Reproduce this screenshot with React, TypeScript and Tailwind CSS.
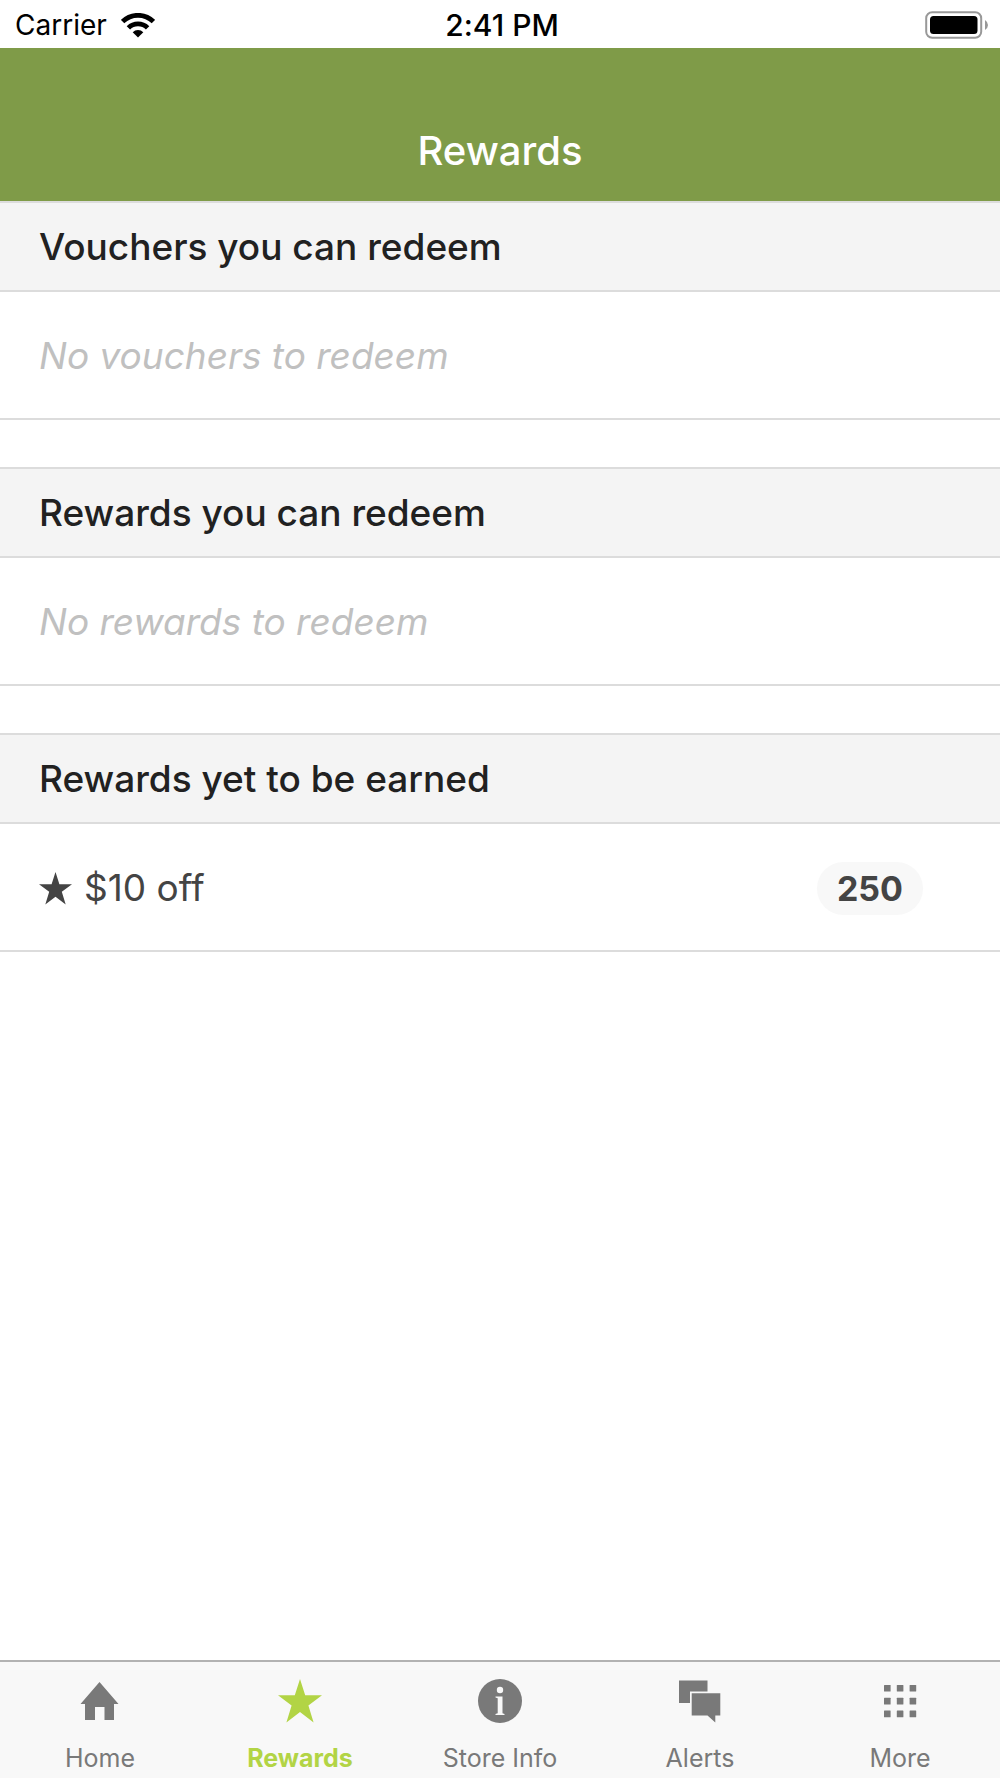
import { useState } from "react";
import type { ReactNode } from "react";

interface Reward {
  id: string;
  title: string;
  points: number;
}

interface Tab {
  id: string;
  label: string;
  icon: ReactNode;
}

const STAR_PATH = "M22 0 L27.2 16.2 H44 L30.4 26.4 L35.6 43.4 L22 33 L8.4 43.4 L13.6 26.4 L0 16.2 H16.8 Z";

const upcomingRewards: Reward[] = [{ id: "ten-off", title: "$10 off", points: 250 }];

const tabs: Tab[] = [
  {
    id: "home",
    label: "Home",
    icon: (
      <path d="M21.5 3 L40.5 25 H36 V41 H26.5 V28 H17 V41 H7 V25 H2.5 Z" />
    ),
  },
  {
    id: "rewards",
    label: "Rewards",
    icon: <path d={STAR_PATH} />,
  },
  {
    id: "store",
    label: "Store Info",
    icon: (
      <>
        <circle cx="22" cy="22" r="22" />
        <circle cx="22" cy="11" r="3.2" className="fill-[#f8f8f8]" />
        <path className="fill-[#f8f8f8]" d="M17.5 17.5 H24.5 V34.3 L26.5 35 V36 H17.5 V35 L19.7 34.3 V19.3 L17.5 18.6 Z" />
      </>
    ),
  },
  {
    id: "alerts",
    label: "Alerts",
    icon: (
      <>
        <path d="M1 1.5 H29.5 V12.5 H12 V24 H1 Z" />
        <path d="M13.7 14.3 H42.3 V36.5 H37.3 V43.5 L29.5 36.5 H13.7 Z" />
      </>
    ),
  },
  {
    id: "more",
    label: "More",
    icon: (
      <>
        {[6, 18.8, 31.6].map((y) =>
          [6, 18.8, 31.6].map((x) => <rect key={`${x}-${y}`} x={x} y={y} width="6.6" height="6.6" rx="0.5" />)
        )}
      </>
    ),
  },
];

function StatusBar() {
  return (
    <div className="flex h-12 items-center bg-white pl-[15px] pr-[11px] pt-0.5 text-[28px] leading-8 text-black">
      <div className="flex flex-1 items-center gap-[14px]">
        <span>Carrier</span>
        <svg viewBox="0 0 34 25" className="h-[25px] w-[34px]" aria-hidden="true">
          <g fill="none" stroke="currentColor" strokeWidth="4.8">
            <path d="M1.6 8.6 A22 22 0 0 1 32.4 8.6" />
            <path d="M7.4 14.9 A13.7 13.7 0 0 1 26.6 14.9" />
          </g>
          <path d="M11.7 19.2 A7.5 7.5 0 0 1 22.3 19.2 L17 24.6 Z" />
        </svg>
      </div>
      <span className="text-[30px] font-medium">2:41 PM</span>
      <div className="flex flex-1 justify-end">
        <svg viewBox="0 0 64 28" className="h-7 w-16" aria-hidden="true">
          <rect x="1.2" y="1.2" width="55" height="25.6" rx="6" fill="none" stroke="#989898" strokeWidth="2" />
          <rect x="5" y="5" width="47.5" height="18" rx="3.5" />
          <path d="M60 9 Q63 11 63 14 Q63 17 60 19 Z" fill="#989898" />
        </svg>
      </div>
    </div>
  );
}

function Section({ title, children }: { title: string; children: ReactNode }) {
  return (
    <section>
      <h2 className="border-y-2 border-[#dcdcdc] bg-[#f4f4f4] px-[39px] pb-[19px] pt-5 text-[37px] font-medium leading-12 text-[#212121]">
        {title}
      </h2>
      <div className="flex min-h-32 items-center border-b-2 border-[#dcdcdc] pl-[39px] pr-[77px] pt-0.5 text-[37px] leading-12 text-[#444]">
        {children}
      </div>
    </section>
  );
}

function EmptyText({ children }: { children: ReactNode }) {
  return <p className="italic text-[#c0c0c0]">{children}</p>;
}

export default function App() {
  const [activeTab, setActiveTab] = useState("rewards");

  return (
    <div className="flex min-h-screen flex-col bg-white font-['Inter',sans-serif] [font-variant-ligatures:none]">
      <StatusBar />
      <header className="bg-[#7f9b48] pb-[25px] pt-[78px] text-center text-white">
        <h1 className="text-[40px] font-medium leading-[50px]">Rewards</h1>
      </header>

      <main className="flex flex-1 flex-col gap-[47px]">
        <Section title="Vouchers you can redeem">
          <EmptyText>No vouchers to redeem</EmptyText>
        </Section>
        <Section title="Rewards you can redeem">
          <EmptyText>No rewards to redeem</EmptyText>
        </Section>
        <Section title="Rewards yet to be earned">
          {upcomingRewards.map((reward) => (
            <div key={reward.id} className="flex flex-1 items-center gap-3">
              <svg viewBox="0 0 44 44" className="size-[33px] fill-current" aria-hidden="true">
                <path d={STAR_PATH} />
              </svg>
              <span className="flex-1">{reward.title}</span>
              <span className="rounded-full bg-[#f8f8f8] px-5 pb-2 pt-[9px] text-[34px] font-bold leading-9">{reward.points}</span>
            </div>
          ))}
        </Section>
      </main>

      <nav className="flex border-t-2 border-[#b2b2b2] bg-[#f8f8f8]">
        {tabs.map((tab) => (
          <button
            key={tab.id}
            type="button"
            onClick={() => setActiveTab(tab.id)}
            className={`flex flex-1 basis-0 flex-col items-center gap-[19px] pb-1 pt-[17px] text-[25px] leading-8 ${
              activeTab === tab.id ? "font-bold text-[#b2d445]" : "text-[#797979]"
            }`}
          >
            <svg viewBox="0 0 44 44" className="size-11 fill-current" aria-hidden="true">
              {tab.icon}
            </svg>
            {tab.label}
          </button>
        ))}
      </nav>
    </div>
  );
}
